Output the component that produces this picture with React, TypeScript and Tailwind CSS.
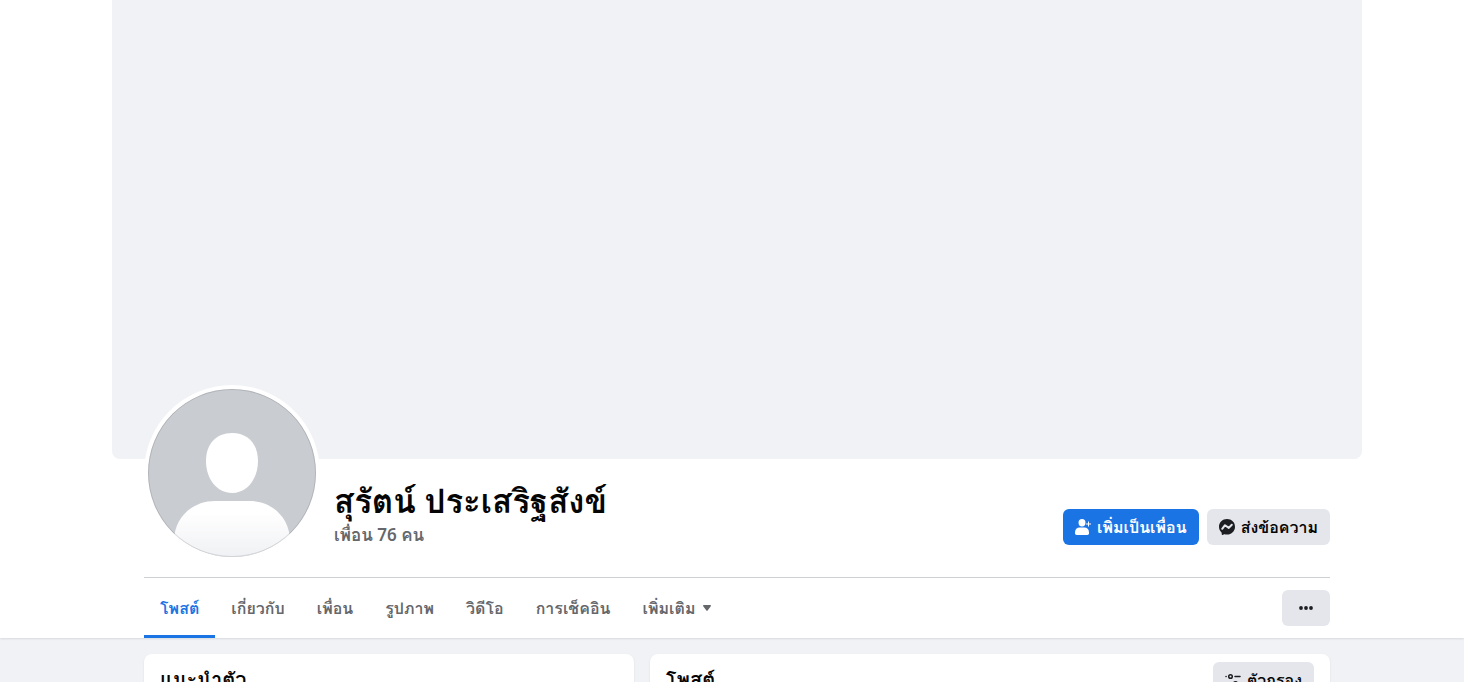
import type { ReactNode } from "react";

type Tab = {
  label: string;
  href: string;
  active?: boolean;
};

const tabs: Tab[] = [
  { label: "โพสต์", href: "#posts", active: true },
  { label: "เกี่ยวกับ", href: "#about" },
  { label: "เพื่อน", href: "#friends" },
  { label: "รูปภาพ", href: "#photos" },
  { label: "วิดีโอ", href: "#videos" },
  { label: "การเช็คอิน", href: "#checkins" },
];

function Avatar() {
  return (
    <svg viewBox="0 0 168 168" className="block size-[168px]" role="img" aria-label="สุรัตน์ ประเสริฐสังข์">
      <defs>
        <clipPath id="avatar-clip">
          <circle cx="84" cy="84" r="84" />
        </clipPath>
        <linearGradient id="avatar-body" x1="0" y1="0" x2="0" y2="1">
          <stop offset="0.2" stopColor="#ffffff" />
          <stop offset="1" stopColor="#f0f1f4" />
        </linearGradient>
      </defs>
      <g clipPath="url(#avatar-clip)">
        <rect width="168" height="168" fill="#c9ccd1" />
        <path d="M84 44c16 0 26 11 26 28 0 18-11 32-26 32S58 90 58 72c0-17 10-28 26-28Z" fill="#fff" />
        <path d="M67 112h35c22 0 40 17 40 40v16H26v-16c0-23 18-40 41-40Z" fill="url(#avatar-body)" />
      </g>
      <circle cx="84" cy="84" r="83.5" fill="none" stroke="#000" strokeOpacity="0.12" />
    </svg>
  );
}

function AddFriendIcon() {
  return (
    <svg viewBox="0 0 16 16" className="size-4 shrink-0" fill="currentColor" aria-hidden="true">
      <ellipse cx="7" cy="3.700" rx="3.500" ry="3.700" />
      <path d="M0 13.2C0 10.500 2 8.600 4.700 8.600h4.600C12 8.600 14 10.500 14 13.200V14.200a1.700 1.700 0 0 1-1.700 1.700H1.700A1.700 1.700 0 0 1 0 14.200Z" />
      <path d="M13.500 2.500v5M11 5h5" fill="none" stroke="currentColor" strokeWidth="1" />
    </svg>
  );
}

function MessengerIcon() {
  return (
    <svg viewBox="0 0 16 16" className="size-4 shrink-0" aria-hidden="true">
      <path
        d="M8 0C3.500 0 0 3.300 0 7.700c0 2.300 1 4.300 2.500 5.700.1.100.2.300.2.500v1.400c.1.500.5.800.9.600l1.600-.7c.1-.1.300-.1.400 0 .8.200 1.600.300 2.400.300 4.500 0 8-3.300 8-7.800S12.500 0 8 0Z"
        fill="#1c1e21"
      />
      <path d="M3.200 9.800 6 6.200 9.800 8.900 12.800 5.700" fill="none" stroke="#e4e6eb" strokeWidth="2" strokeLinejoin="round" strokeLinecap="round" />
    </svg>
  );
}

function FilterIcon() {
  return (
    <svg viewBox="0 0 16 16" className="size-4 shrink-0" fill="none" stroke="#1c1e21" strokeWidth="1.500" strokeLinecap="round" aria-hidden="true">
      <circle cx="5.500" cy="4.500" r="1.800" />
      <path d="M1 4.500h.1M10 4.500h5M1 11.500h5M14.800 11.500h.1" />
      <circle cx="10.500" cy="11.500" r="1.800" />
    </svg>
  );
}

function Card({ id, title, className, children }: { id: string; title: string; className: string; children?: ReactNode }) {
  return (
    <section id={id} className={`rounded-lg bg-white px-4 pt-2 pb-4 shadow-[0_1px_2px_rgba(0,0,0,0.1)] ${className}`}>
      <div className="flex items-center justify-between">
        <h2 className="text-xl leading-9 font-bold text-[#050505]">{title}</h2>
        {children}
      </div>
    </section>
  );
}

export default function App() {
  return (
    <div className="h-screen overflow-hidden bg-[#f0f2f5] font-['Noto_Sans','Loma','Waree','Noto_Sans_Thai_Looped','Noto_Sans_Thai',sans-serif] text-[#050505]">
      <header className="bg-white pl-2.5 shadow-[0_1px_2px_rgba(0,0,0,0.1)]">
        <div className="mx-auto max-w-[1250px]">
          <div className="h-[459px] rounded-b-lg bg-[#f0f2f5]" />
          <div className="px-8">
            <div className="-mt-[74px] flex items-end border-b border-[#ced0d4] pb-4">
              <div className="shrink-0 rounded-full bg-white p-1">
                <Avatar />
              </div>
              <div className="ml-3.5 grow pb-3.5">
                <h1 className="text-[33px] leading-[44px] font-bold">สุรัตน์ ประเสริฐสังข์</h1>
                <a href="#friends" className="block text-[17px] leading-6 font-semibold text-[#65676b]">
                  เพื่อน 76 คน
                </a>
              </div>
              <div className="flex gap-2 pb-4 text-base font-bold">
                <button type="button" className="flex h-9 items-center gap-1.5 rounded-md bg-[#1b74e4] px-3 text-white">
                  <AddFriendIcon />
                  เพิ่มเป็นเพื่อน
                </button>
                <button type="button" className="flex h-9 items-center gap-1.5 rounded-md bg-[#e4e6eb] px-3">
                  <MessengerIcon />
                  ส่งข้อความ
                </button>
              </div>
            </div>
            <div className="flex items-center justify-between">
              <nav className="flex text-base font-semibold text-[#65676b]">
                {tabs.map((tab) => (
                  <a
                    key={tab.label}
                    href={tab.href}
                    aria-current={tab.active ? "page" : undefined}
                    className={`flex h-[60px] items-center border-y-3 border-t-transparent px-4 ${
                      tab.active ? "border-b-[#1b74e4] text-[#1b74e4]" : "border-b-transparent"
                    }`}
                  >
                    {tab.label}
                  </a>
                ))}
                <button type="button" className="flex h-[60px] items-center gap-2 px-4" aria-haspopup="menu">
                  เพิ่มเติม
                  <svg viewBox="0 0 8 6" className="h-1.5 w-2" fill="currentColor" aria-hidden="true">
                    <path d="M.8 0h6.400c.7 0 1 .8.600 1.300L4.600 5.600a.8.800 0 0 1-1.200 0L.2 1.300C-.2.800.1 0 .8 0Z" />
                  </svg>
                </button>
              </nav>
              <button type="button" aria-label="ตัวเลือก" className="flex h-9 w-12 items-center justify-center rounded-md bg-[#e4e6eb]">
                <svg viewBox="0 0 16 16" className="size-4" fill="#1c1e21" aria-hidden="true">
                  <circle cx="3" cy="8" r="1.900" />
                  <circle cx="8" cy="8" r="1.900" />
                  <circle cx="13" cy="8" r="1.900" />
                </svg>
              </button>
            </div>
          </div>
        </div>
      </header>

      <main className="pl-2.5">
        <div className="mx-auto flex max-w-[1250px] items-start gap-4 px-8 pt-4">
          <Card id="about" title="แนะนำตัว" className="w-[490px] shrink-0" />
          <Card id="posts" title="โพสต์" className="grow">
            <button type="button" className="flex h-9 items-center gap-1.5 rounded-md bg-[#e4e6eb] px-3 text-base font-semibold">
              <FilterIcon />
              ตัวกรอง
            </button>
          </Card>
        </div>
      </main>
    </div>
  );
}
